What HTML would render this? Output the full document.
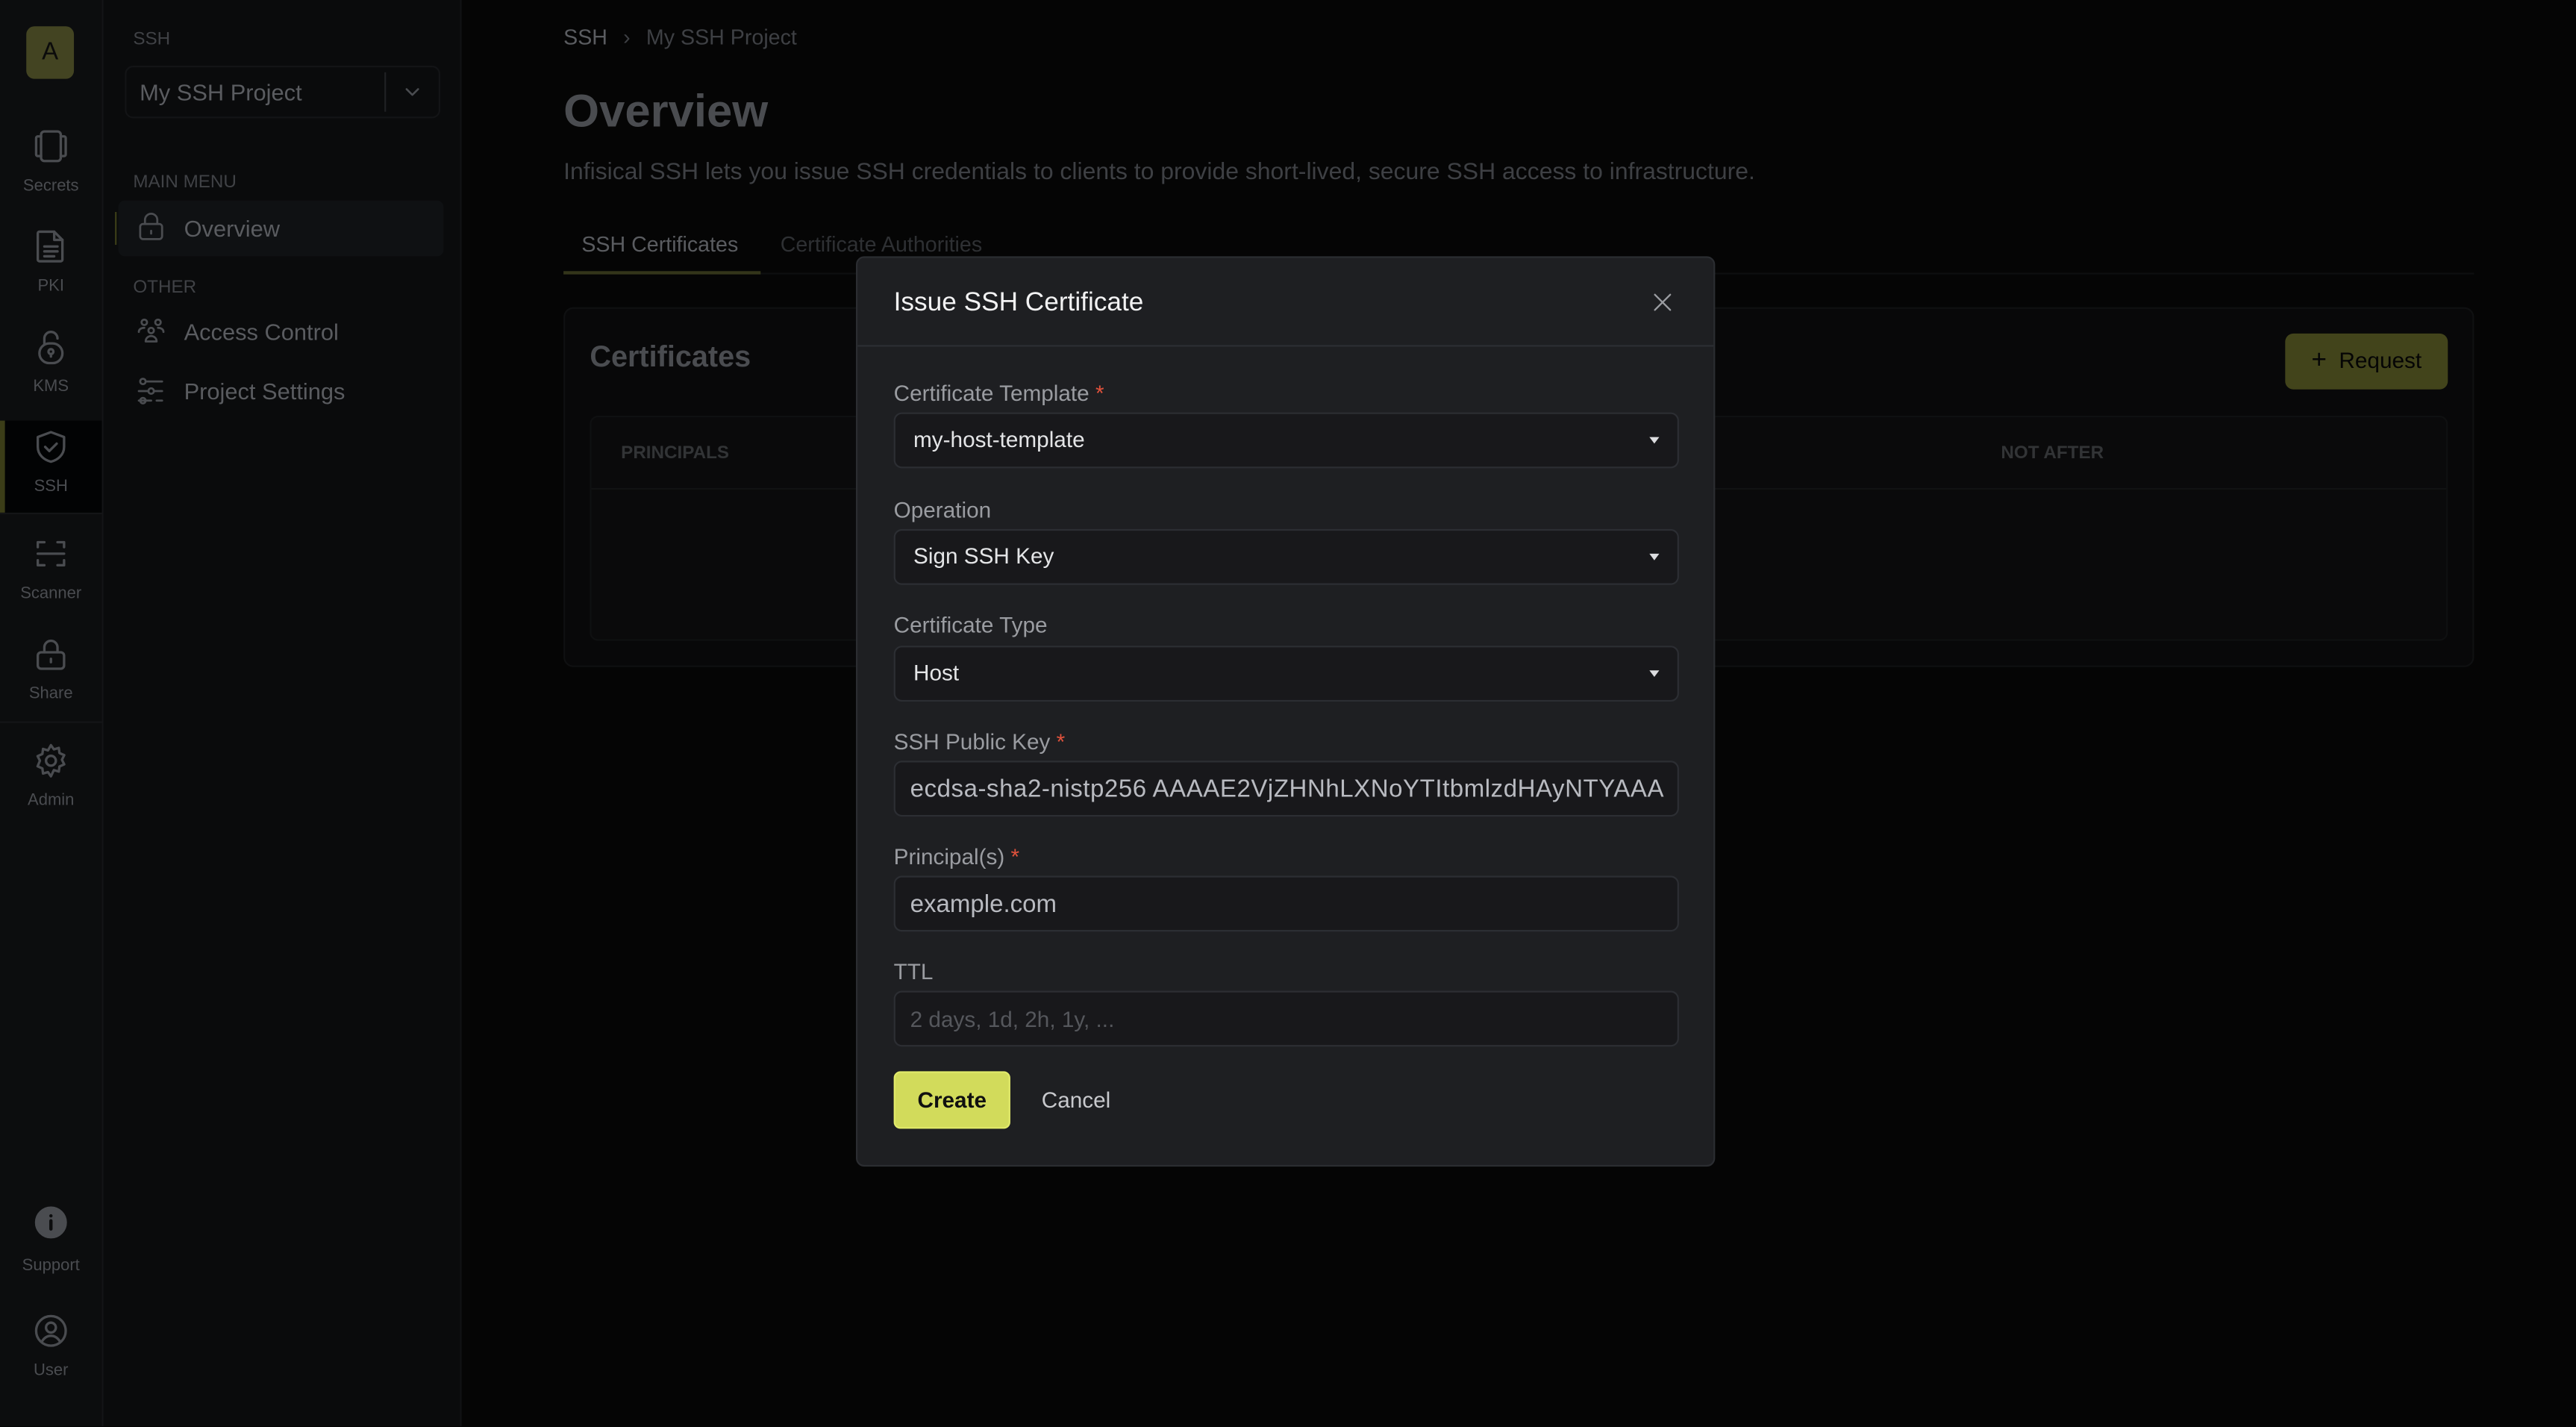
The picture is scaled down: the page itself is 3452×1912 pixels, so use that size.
<!DOCTYPE html>
<html><head><meta charset="utf-8"><style>
html,body{margin:0;padding:0;background:#050505;width:3452px;height:1912px;overflow:hidden}
#w{position:absolute;left:0;top:0;width:1568px;height:868.5px;transform:scale(2.2015);transform-origin:0 0;font-family:"Liberation Sans",sans-serif;background:#050505}
.a{position:absolute}
.rail{left:0;top:0;width:62px;height:868px;background:#0c0d0e;border-right:1px solid #141517}
.side{left:63px;top:0;width:217px;height:868px;background:#0a0b0c;border-right:1px solid #111214}
.rl{position:absolute;left:0;width:62px;text-align:center;font-size:10px;color:#4a4c50}
.ic{position:absolute;left:19px;width:24px;height:24px}
svg{fill:none;stroke:#4a4c50;stroke-width:1.5;stroke-linecap:round;stroke-linejoin:round}
.st{font-size:11px;color:#404246}
.nv{font-size:14px;color:#5a5c60}
.lab{position:absolute;left:22px;font-size:13.5px;color:#9a9ca1}
.lab b{color:#e0523c;font-weight:normal}
.in{position:absolute;left:22px;width:478px;height:34px;background:#18181b;border:1px solid #2c2e33;border-radius:5px;box-sizing:border-box}
.in span{position:absolute;left:11px;top:8px;font-size:13.5px;color:#e4e5e7}
.car{position:absolute;right:11px;top:14px;width:0;height:0;border-left:3.5px solid transparent;border-right:3.5px solid transparent;border-top:4.5px solid #dcdde0}
</style></head><body><div id="w">
<div class="a rail">
 <div class="a" style="left:16px;top:16px;width:29px;height:32px;background:#434422;border-radius:5px;color:#0b0b0b;font-size:15px;text-align:center;line-height:32px">A</div>
 <svg class="ic" style="top:77px" viewBox="0 0 24 24"><rect x="6" y="3" width="12" height="18" rx="2"/><path d="M6 6H4a1 1 0 0 0-1 1v10a1 1 0 0 0 1 1h2M18 6h2a1 1 0 0 1 1 1v10a1 1 0 0 1-1 1h-2"/></svg>
 <div class="rl" style="top:108px">Secrets</div>
 <svg class="ic" style="top:138px" viewBox="0 0 24 24"><path d="M5 3h9l5 5v12a1 1 0 0 1-1 1H5a1 1 0 0 1-1-1V4a1 1 0 0 1 1-1z"/><path d="M14 3v5h5M8 12h8M8 15h8M8 18h6"/></svg>
 <div class="rl" style="top:169px">PKI</div>
 <svg class="ic" style="top:199px" viewBox="0 0 24 24"><path d="M8 10V7a4 4 0 0 1 8 0"/><rect x="5" y="10" width="14" height="12" rx="6"/><circle cx="12" cy="15" r="1.5"/><path d="M12 16.5V18"/></svg>
 <div class="rl" style="top:230px">KMS</div>
 <div class="a" style="left:0;top:256px;width:62px;height:56px;background:#020304"></div>
 <div class="a" style="left:0;top:256px;width:3px;height:56px;background:#3b3d18"></div>
 <svg class="ic" style="top:260px" viewBox="0 0 24 24"><path d="M12 3l8 3v6c0 5-4 8-8 9-4-1-8-4-8-9V6z"/><path d="M8.5 12l2.5 2.5 4.5-4.5"/></svg>
 <div class="rl" style="top:291px">SSH</div>
 <div class="a" style="left:0;top:312px;width:62px;height:1px;background:#141517"></div>
 <svg class="ic" style="top:325px" viewBox="0 0 24 24"><path d="M4 8V5h4M16 5h4v3M4 16v3h4M16 19h4v-3M4 12h16"/></svg>
 <div class="rl" style="top:356px">Scanner</div>
 <svg class="ic" style="top:386px" viewBox="0 0 24 24"><rect x="4" y="11" width="16" height="10" rx="2"/><path d="M8 11V8a4 4 0 0 1 8 0v3M12 15v2"/></svg>
 <div class="rl" style="top:417px">Share</div>
 <div class="a" style="left:0;top:439px;width:62px;height:1px;background:#141517"></div>
 <svg class="ic" style="top:451px" viewBox="0 0 24 24"><circle cx="12" cy="12" r="3"/><path d="M12 2.5l1.8 2.6 3-.9.4 3.1 2.9 1.3-1.4 2.8 1.4 2.8-2.9 1.3-.4 3.1-3-.9L12 21.5l-1.8-2.6-3 .9-.4-3.1-2.9-1.3L5.3 12 3.9 9.2l2.9-1.3.4-3.1 3 .9z"/></svg>
 <div class="rl" style="top:482px">Admin</div>
 <svg class="ic" style="top:732px" viewBox="0 0 24 24"><circle cx="12" cy="12" r="9" fill="#4a4c50"/><path d="M12 11v5M12 8h.01" stroke="#0c0d0e" stroke-width="2"/></svg>
 <div class="rl" style="top:765px">Support</div>
 <svg class="ic" style="top:798px" viewBox="0 0 24 24"><circle cx="12" cy="12" r="9"/><circle cx="12" cy="10" r="3"/><path d="M6.5 18.5c1.5-2.5 3.5-3.5 5.5-3.5s4 1 5.5 3.5"/></svg>
 <div class="rl" style="top:829px">User</div>
</div>
<div class="a side">
 <div class="a st" style="left:18px;top:18px">SSH</div>
 <div class="a" style="left:13px;top:40px;width:192px;height:32px;border:1px solid #131416;border-radius:5px;box-sizing:border-box">
  <div class="a" style="left:8px;top:7px;font-size:14px;color:#5a5c60">My SSH Project</div>
  <div class="a" style="left:157px;top:3px;width:1px;height:24px;background:#202124"></div>
  <svg class="a" style="left:167px;top:8px;width:14px;height:14px;stroke-width:2" viewBox="0 0 24 24"><path d="M6 9l6 6 6-6"/></svg>
 </div>
 <div class="a st" style="left:18px;top:105px">MAIN MENU</div>
 <div class="a" style="left:9px;top:122px;width:198px;height:34px;background:#0f1113;border-radius:4px"></div>
 <div class="a" style="left:7px;top:129px;width:1px;height:20px;background:#3b3d18"></div>
 <svg class="a" style="left:19px;top:128px;width:20px;height:20px" viewBox="0 0 24 24"><rect x="4" y="10" width="16" height="11" rx="2"/><path d="M7.5 10V7a4.5 4.5 0 0 1 9 0v3M12 15v2"/></svg>
 <div class="a nv" style="left:49px;top:131px">Overview</div>
 <div class="a st" style="left:18px;top:169px">OTHER</div>
 <svg class="a" style="left:19px;top:192px;width:20px;height:20px" viewBox="0 0 24 24"><circle cx="7" cy="5" r="2"/><circle cx="17" cy="5" r="2"/><circle cx="12" cy="11" r="2"/><path d="M3 12c0-2 2-3 4-3M21 12c0-2-2-3-4-3M8 19c0-2.5 2-4 4-4s4 1.5 4 4z"/></svg>
 <div class="a nv" style="left:49px;top:194px">Access Control</div>
 <svg class="a" style="left:19px;top:228px;width:20px;height:20px" viewBox="0 0 24 24"><path d="M9 5h11M3 12h7M14 12h6M3 19h9M16 19h4"/><circle cx="6" cy="5" r="2"/><circle cx="12" cy="12" r="2"/><circle cx="6" cy="19" r="2"/></svg>
 <div class="a nv" style="left:49px;top:230px">Project Settings</div>
</div>
<div class="a" style="left:343px;top:15px;font-size:13px;color:#5a5c60">SSH <span style="color:#3e4044;margin:0 6px">&#x203A;</span> <span style="color:#3e4044">My SSH Project</span></div>
<div class="a" style="left:343px;top:52px;font-size:28px;font-weight:bold;color:#4a4c50">Overview</div>
<div class="a" style="left:343px;top:97px;font-size:14.5px;color:#3e4044">Infisical SSH lets you issue SSH credentials to clients to provide short-lived, secure SSH access to infrastructure.</div>
<div class="a" style="left:354px;top:141px;font-size:13px;color:#5a5c60">SSH Certificates</div>
<div class="a" style="left:475px;top:141px;font-size:13px;color:#2e3033">Certificate Authorities</div>
<div class="a" style="left:343px;top:166px;width:1163px;height:1px;background:#0e0f10"></div>
<div class="a" style="left:343px;top:165px;width:120px;height:2px;background:#33351a"></div>
<div class="a" style="left:343px;top:187px;width:1163px;height:219px;background:#080809;border:1px solid #0f1011;border-radius:6px;box-sizing:border-box"></div>
<div class="a" style="left:359px;top:207px;font-size:18px;font-weight:bold;color:#4a4c50">Certificates</div>
<div class="a" style="left:1391px;top:203px;width:99px;height:34px;background:#42441b;border-radius:5px;font-size:13.5px;color:#050505;line-height:34px;text-align:center"><span style="font-size:16px">+</span>&nbsp; Request</div>
<div class="a" style="left:359px;top:253px;width:1131px;height:137px;background:#0a0a0b;border:1px solid #0f1011;border-radius:5px;box-sizing:border-box"></div>
<div class="a" style="left:360px;top:297px;width:1129px;height:1px;background:#111213"></div>
<div class="a" style="left:378px;top:270px;font-size:11px;font-weight:bold;color:#323436">PRINCIPALS</div>
<div class="a" style="left:1218px;top:270px;font-size:11px;font-weight:bold;color:#323436">NOT AFTER</div>

<div class="a" style="left:521px;top:156px;width:523px;height:554px;background:#1e1f22;border:1px solid #2b2d31;border-radius:5px;box-sizing:border-box">
 <div class="a" style="left:22px;top:19px;font-size:16px;color:#f2f2f3">Issue SSH Certificate</div>
 <svg class="a" style="left:482px;top:19px;width:16px;height:16px;stroke:#9a9ca1;stroke-width:1.6" viewBox="0 0 24 24"><path d="M5 5l14 14M19 5L5 19"/></svg>
 <div class="a" style="left:0;top:53px;width:521px;height:1px;background:#2c2e33"></div>
 <div class="lab" style="top:75px">Certificate Template <b>*</b></div>
 <div class="in" style="top:94px"><span>my-host-template</span><i class="car"></i></div>
 <div class="lab" style="top:146px">Operation</div>
 <div class="in" style="top:165px"><span>Sign SSH Key</span><i class="car"></i></div>
 <div class="lab" style="top:216px">Certificate Type</div>
 <div class="in" style="top:236px"><span>Host</span><i class="car"></i></div>
 <div class="lab" style="top:287px">SSH Public Key <b>*</b></div>
 <div class="in" style="top:306px;overflow:hidden"><span style="left:9px;font-size:15px;letter-spacing:0.25px;color:#b8bac0;top:8px;white-space:nowrap">ecdsa-sha2-nistp256 AAAAE2VjZHNhLXNoYTItbmlzdHAyNTYAAA</span></div>
 <div class="lab" style="top:357px">Principal(s) <b>*</b></div>
 <div class="in" style="top:376px"><span style="left:9px;font-size:15px;color:#b8bac0;top:8px">example.com</span></div>
 <div class="lab" style="top:427px">TTL</div>
 <div class="in" style="top:446px"><span style="left:9px;color:#55575c;top:9px">2 days, 1d, 2h, 1y, ...</span></div>
 <div class="a" style="left:22px;top:495px;width:71px;height:35px;background:#d2db5b;border:1px solid #e1ea6a;border-radius:4px;box-sizing:border-box;font-size:13.5px;font-weight:bold;color:#101010;text-align:center;line-height:33px">Create</div>
 <div class="a" style="left:112px;top:505px;font-size:13.5px;color:#c8c9cd">Cancel</div>
</div>
</div></body></html>
